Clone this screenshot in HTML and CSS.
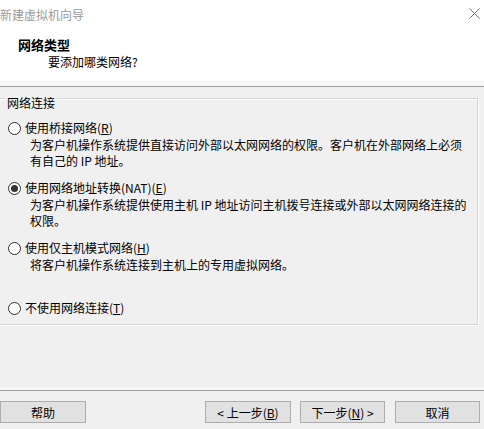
FILE: index.html
```html
<!DOCTYPE html>
<html lang="zh-CN">
<head>
    <meta charset="UTF-8">
    <meta name="viewport" content="width=device-width, initial-scale=1.0">
    <title>新建虚拟机向导</title>
    <link rel="stylesheet" href="styles.css">
</head>
<body>

<div class="wizard">
    <div class="header">
        <div class="titlebar">
            <span class="title">新建虚拟机向导</span>
            <svg class="close" width="11" height="11" viewBox="0 0 11 11">
                <path d="M0.5 0.5 L10.5 10.5 M10.5 0.5 L0.5 10.5" stroke="#707070" stroke-width="1" fill="none"/>
            </svg>
        </div>
        <div class="head-title">网络类型</div>
        <div class="head-sub">要添加哪类网络?</div>
    </div>

    <div class="main">
        <div class="group">
            <div class="group-label">网络连接</div>

            <div class="option">
                <div class="option-row">
                    <span class="radio"></span>
                    <span>使用桥接网络(<u>R</u>)</span>
                </div>
                <div class="desc">为客户机操作系统提供直接访问外部以太网网络的权限。客户机在外部网络上必须<br>有自己的 IP 地址。</div>
            </div>

            <div class="option">
                <div class="option-row">
                    <span class="radio checked"></span>
                    <span>使用网络地址转换(NAT)(<u>E</u>)</span>
                </div>
                <div class="desc">为客户机操作系统提供使用主机 IP 地址访问主机拨号连接或外部以太网网络连接的<br>权限。</div>
            </div>

            <div class="option">
                <div class="option-row">
                    <span class="radio"></span>
                    <span>使用仅主机模式网络(<u>H</u>)</span>
                </div>
                <div class="desc">将客户机操作系统连接到主机上的专用虚拟网络。</div>
            </div>

            <div class="option last">
                <div class="option-row">
                    <span class="radio"></span>
                    <span>不使用网络连接(<u>T</u>)</span>
                </div>
            </div>
        </div>
    </div>

    <div class="footer">
        <button class="btn">帮助</button>
        <div class="nav">
            <button class="btn">&lt; 上一步(<u>B</u>)</button>
            <button class="btn next">下一步(<u>N</u>) &gt;</button>
            <button class="btn cancel">取消</button>
        </div>
    </div>
</div>

</body>
</html>
```

FILE: styles.css
```css
body {
    margin: 0;
    background-color: #f0f0f0;
    font-family: "Noto Sans CJK SC", "Liberation Sans", sans-serif;
    font-size: 12px;
    line-height: 16px;
    color: #000;
    overflow: hidden;
}
.wizard {
    display: flex;
    flex-direction: column;
    height: 429px;
}
.header {
    background-color: #fff;
    height: 87px;
    box-sizing: border-box;
    border-bottom: 1px solid #a0a0a0;
    box-shadow: inset 0 -5px 0 #f7f7f7, inset 0 -6px 0 #fdfdfd;
}
.titlebar {
    display: flex;
    justify-content: space-between;
    height: 30px;
    padding-top: 7px;
    padding-right: 4px;
    box-sizing: border-box;
}
.title {
    color: #9a9a9a;
}
.close {
    margin-top: 1px;
}
.head-title {
    margin-top: 7px;
    padding-left: 18px;
    font-size: 13px;
    font-weight: bold;
}
.head-sub {
    margin-top: 1px;
    padding-left: 48px;
}
.main {
    flex: 1;
    padding-top: 11px;
}
.group {
    margin-left: -2px;
    width: 480px;
    height: 227px;
    box-sizing: border-box;
    border: 1px solid #d5d5d5;
    box-shadow: inset 1px 1px 0 #fff, 1px 1px 0 #fff;
}
.group-label {
    width: fit-content;
    margin-top: -4px;
    margin-left: 6px;
    padding: 0 2px;
    background-color: #f0f0f0;
}
.option {
    height: 60px;
    padding-left: 9px;
}
.option:first-of-type {
    margin-top: 9px;
}
.group-label + .option {
    margin-top: 9px;
}
.option-row {
    display: flex;
    align-items: center;
    gap: 4px;
    height: 16px;
}
.radio {
    width: 13px;
    height: 13px;
    box-sizing: border-box;
    border: 1px solid #333;
    border-radius: 50%;
    background-color: #fff;
    display: flex;
    align-items: center;
    justify-content: center;
}
.radio.checked::after {
    content: "";
    width: 7px;
    height: 7px;
    border-radius: 50%;
    background-color: #333;
}
.desc {
    margin-top: 1px;
    padding-left: 22px;
}
.option.last {
    height: 16px;
}
.footer {
    display: flex;
    justify-content: space-between;
    border-top: 1px solid #a0a0a0;
    box-shadow: 0 -3px 0 #f7f7f7;
    padding: 10px 4px 6px 0;
}
.nav {
    display: flex;
    gap: 9px;
}
.btn {
    width: 86px;
    height: 22px;
    padding: 0;
    background-color: #e1e1e1;
    border: 1px solid #adadad;
    font-family: inherit;
    font-size: 12px;
    color: #000;
}
.btn.cancel {
    margin-left: 1px;
    width: 85px;
}
.btn.next {
    width: 85px;
}
```
